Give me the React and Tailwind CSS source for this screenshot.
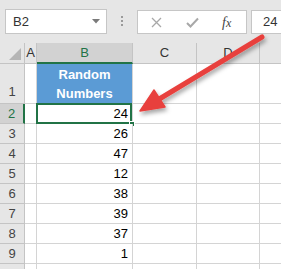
import React from "react";

const rows = [
  { n: 2, v: 24 },
  { n: 3, v: 26 },
  { n: 4, v: 47 },
  { n: 5, v: 12 },
  { n: 6, v: 38 },
  { n: 7, v: 39 },
  { n: 8, v: 37 },
  { n: 9, v: 1 },
  { n: "", v: "" },
];

const font = { fontFamily: '"Liberation Sans", Arial, sans-serif' };

function Toolbar() {
  return (
    <div className="flex h-[43px] items-start bg-[#e6e6e6] pt-[9px]">
      {/* name box */}
      <div className="ml-[5px] flex h-[25px] w-[102px] items-center justify-between border border-[#c6c6c6] bg-white pl-[7px] pr-[6px]">
        <span className="text-[13px] text-[#333]">B2</span>
        <svg width="8" height="5" viewBox="0 0 8 5">
          <path d="M0 0 L8 0 L4 4.5 Z" fill="#7a7a7a" />
        </svg>
      </div>
      {/* dots */}
      <div className="ml-[14px] mt-[7px] flex w-[3px] flex-col gap-[2px]">
        <span className="h-[2px] w-[2px] bg-[#9a9a9a]" />
        <span className="h-[2px] w-[2px] bg-[#9a9a9a]" />
        <span className="h-[2px] w-[2px] bg-[#9a9a9a]" />
      </div>
      {/* formula buttons */}
      <div className="ml-[13px] mt-px flex h-[24px] w-[110px] items-center border border-[#c6c6c6] bg-white">
        <svg className="ml-[13px]" width="11" height="11" viewBox="0 0 11 11">
          <path d="M1 1 L10 10 M10 1 L1 10" stroke="#a8a8a8" strokeWidth="1.3" />
        </svg>
        <svg className="ml-[24px]" width="13" height="11" viewBox="0 0 13 11">
          <path d="M1 6 L4.5 9.5 L12 1.5" stroke="#a8a8a8" strokeWidth="2" fill="none" />
        </svg>
        <span
          className="ml-[23px] text-[14px] italic text-[#444]"
          style={{ fontFamily: '"Liberation Serif", "Times New Roman", serif' }}
        >
          f<span className="text-[12px]">x</span>
        </span>
      </div>
      {/* value box */}
      <div className="ml-[4px] mt-px flex h-[24px] flex-1 items-center border border-r-0 border-[#c6c6c6] bg-white pl-[11px]">
        <span className="text-[13px] text-[#333]">24</span>
      </div>
    </div>
  );
}

function Grid() {
  const cell = "border-b border-r border-[#d4d4d4] bg-white";
  const rowHead =
    "flex items-center justify-center border-b border-r border-[#c4c4c4] bg-[#e6e6e6] text-[13px] text-[#444]";
  return (
    <div className="grid grid-cols-[25px_12px_96px_64px_63px_1fr]">
      {/* header row */}
      <div className="relative h-[21px] border-b border-r border-[#c4c4c4] bg-[#e6e6e6]">
        <svg className="absolute bottom-[3px] right-[3px]" width="12" height="12" viewBox="0 0 12 12">
          <path d="M0 12 L12 12 L12 0 Z" fill="#b5b5b5" />
        </svg>
      </div>
      <div className="flex h-[21px] items-center justify-center border-b border-r border-[#c4c4c4] bg-[#e6e6e6] text-[13px] text-[#333]">
        A
      </div>
      <div className="flex h-[21px] items-center justify-center border-b-2 border-r border-b-[#217346] border-r-[#c4c4c4] bg-[#d2d2d2] text-[13px] text-[#217346]">
        B
      </div>
      <div className="flex h-[21px] items-center justify-center border-b border-r border-[#c4c4c4] bg-[#e6e6e6] text-[13px] text-[#333]">
        C
      </div>
      <div className="flex h-[21px] items-center justify-center border-b border-r border-[#c4c4c4] bg-[#e6e6e6] text-[13px] text-[#333]">
        D
      </div>
      <div className="h-[21px] border-b border-[#c4c4c4] bg-[#e6e6e6]" />

      {/* row 1 */}
      <div className={`${rowHead} h-[40px] items-end pb-[2px]`}>1</div>
      <div className={`${cell} h-[40px]`} />
      <div className="flex h-[40px] flex-col items-center justify-center border-b border-r border-[#d4d4d4] bg-[#5b9bd5] text-[13px] font-bold leading-[19px] text-white">
        <span>Random</span>
        <span>Numbers</span>
      </div>
      <div className={`${cell} h-[40px]`} />
      <div className={`${cell} h-[40px]`} />
      <div className="h-[40px] border-b border-[#d4d4d4] bg-white" />

      {rows.map((r, i) => {
        const sel = r.n === 2;
        return (
          <React.Fragment key={i}>
            <div
              className={
                sel
                  ? "flex h-[20px] items-center justify-center border-b border-r-2 border-b-[#c4c4c4] border-r-[#217346] bg-[#d2d2d2] text-[13px] text-[#217346]"
                  : `${rowHead} h-[20px]`
              }
            >
              {r.n}
            </div>
            <div className={`${cell} h-[20px]`} />
            <div className={`${cell} relative flex h-[20px] items-center justify-end pr-[4px] text-[13px] text-black`}>
              {r.v}
              {sel && (
                <>
                  <div className="pointer-events-none absolute -left-px -top-px bottom-[-1px] right-0 border-2 border-[#217346]" />
                  <div className="absolute bottom-[-4px] right-[-3px] h-[6px] w-[6px] border border-white bg-[#217346]" />
                </>
              )}
            </div>
            <div className={`${cell} h-[20px]`} />
            <div className={`${cell} h-[20px]`} />
            <div className="h-[20px] border-b border-[#d4d4d4] bg-white" />
          </React.Fragment>
        );
      })}
    </div>
  );
}

export default function App() {
  return (
    <div className="relative h-[269px] w-[281px] overflow-hidden bg-white" style={font}>
      <Toolbar />
      <Grid />
      {/* annotation arrow */}
      <svg className="pointer-events-none absolute left-0 top-0" width="281" height="269" viewBox="0 0 281 269">
        <defs>
          <filter id="sh" x="-20%" y="-20%" width="140%" height="140%">
            <feDropShadow dx="1.5" dy="3" stdDeviation="2" floodColor="#000" floodOpacity="0.35" />
          </filter>
        </defs>
        <g filter="url(#sh)">
          <line x1="262" y1="37" x2="156" y2="101" stroke="#e8413e" strokeWidth="5" strokeLinecap="round" />
          <path d="M140 111 L154 90 L165 107 Z" fill="#e8413e" stroke="#e8413e" strokeWidth="1.5" strokeLinejoin="round" />
        </g>
      </svg>
    </div>
  );
}
